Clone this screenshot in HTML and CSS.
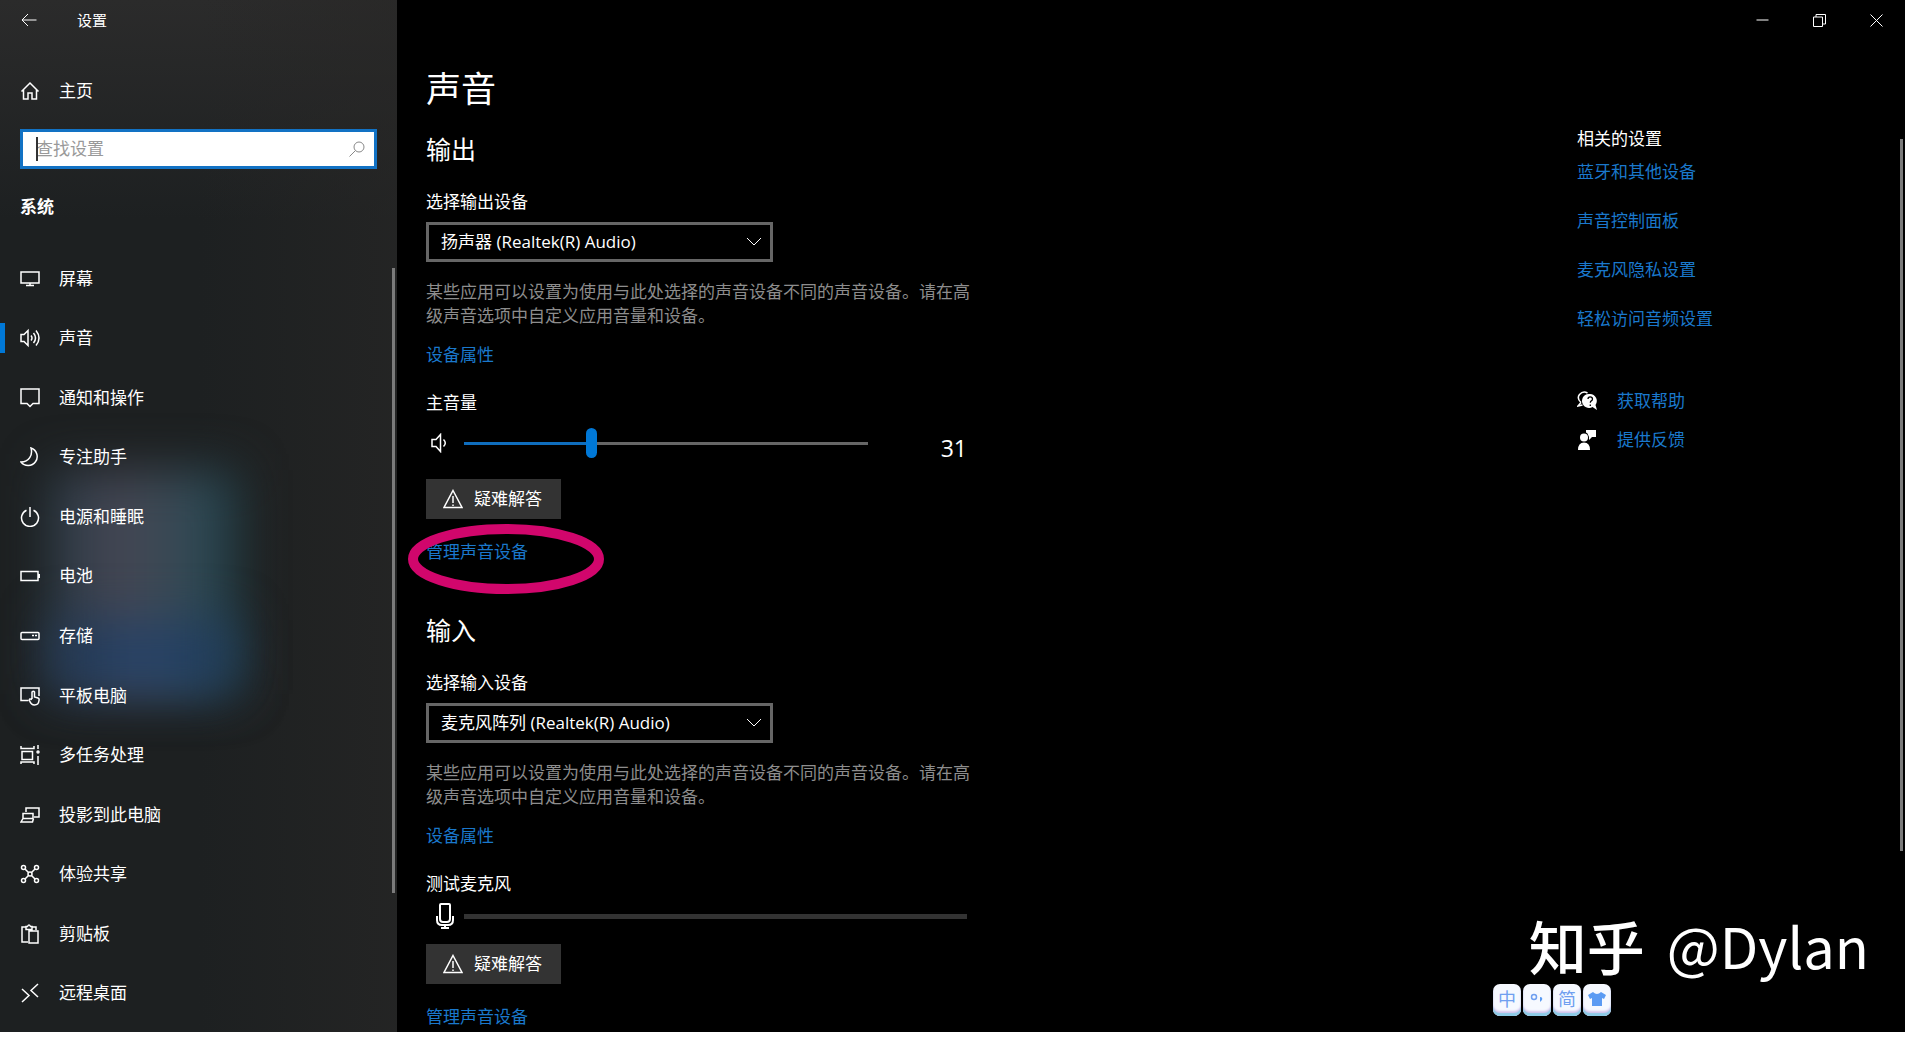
FILE: index.html
```html
<!DOCTYPE html>
<html lang="zh-CN">
<head>
<meta charset="utf-8">
<title>设置</title>
<link rel="stylesheet" href="styles.css">
</head>
<body>
<div class="window">
  <aside class="sidebar">
    <header class="sidebar-title">
      <button class="back" aria-label="返回"><svg class="icon-thin" width="16" height="14" viewBox="0 0 16 14"><path d="M15.500 7H1M7 1L1 7l6 6"/></svg></button>
      <span>设置</span>
    </header>
    <a class="nav-link home" href="#"><svg class="icon" viewBox="0 0 20 20"><path d="M1.500 10.500L10 2l8.500 8.500M3.500 9v9H8v-6h4v6h4.500V9"/></svg>主页</a>
    <label class="search">
      <input type="text" placeholder="查找设置" aria-label="查找设置">
      <svg width="16" height="16" viewBox="0 0 16 16"><circle cx="10" cy="6" r="5"/><path d="M6.500 9.500L.5 15.500"/></svg>
    </label>
    <h2 class="category">系统</h2>
    <nav class="nav">
      <a class="nav-link" href="#"><svg class="icon" viewBox="0 0 20 20"><path d="M1 3h18v11H1zM10 14v2.500M6 16.500h8"/></svg>屏幕</a>
      <a class="nav-link active" href="#"><svg class="icon" viewBox="0 0 20 20"><path d="M1 6.500h3L8 2.500v15l-4-4H1zM11 7.500q2 2.500 0 5M13.500 5q4 5 0 10M16 2.500q6 7.500 0 15"/></svg>声音</a>
      <a class="nav-link" href="#"><svg class="icon" viewBox="0 0 20 20"><path d="M1 1h18v14.500h-6L10 18.500l-3-3H1z"/></svg>通知和操作</a>
      <a class="nav-link" href="#"><svg class="icon" viewBox="0 0 20 20"><path d="M11 1a9 9 0 1 1-10 14C9 15 13 8 11 1z"/></svg>专注助手</a>
      <a class="nav-link" href="#"><svg class="icon" viewBox="0 0 20 20"><path d="M6.500 3.200a8.500 8.500 0 1 0 7 0M10 0v10"/></svg>电源和睡眠</a>
      <a class="nav-link" href="#"><svg class="icon" viewBox="0 0 20 20"><path d="M1 5.500h17v9H1zM19.300 8v4"/></svg>电池</a>
      <a class="nav-link" href="#"><svg class="icon" viewBox="0 0 20 20"><rect x="1" y="6.500" width="18" height="7" rx="1"/><path d="M12 9.500h2M15 9.500h2"/></svg>存储</a>
      <a class="nav-link" href="#"><svg class="icon" viewBox="0 0 20 20"><path d="M8.500 14.500H1V2h18v8M12 13V6q1.500-1.500 2.500 0v5l3.500 1q1.500.5 1 2.500-.5 4.500-4.500 4.500-3.500 0-5-4.500Q9 12 12 13.500"/></svg>平板电脑</a>
      <a class="nav-link" href="#"><svg class="icon" viewBox="0 0 20 20"><path d="M1 1v2.500h13V1M2 6.500h10.500v8H2zM1 19v-2h13v2M18 0v4M18 11v9"/><circle cx="18" cy="7" r="1"/></svg>多任务处理</a>
      <a class="nav-link" href="#"><svg class="icon" viewBox="0 0 20 20"><path d="M6 7V3h13v9h-5M3 8.500h10v5H3zM3 13.500L1 17h11.500l1-3.500"/></svg>投影到此电脑</a>
      <a class="nav-link" href="#"><svg class="icon" viewBox="0 0 20 20"><path d="M5 5l3.500 3.500M15 5l-3.500 3.500M5 15l3.500-3.500M15 15l-3.500-3.500"/><circle cx="3.500" cy="3.500" r="2"/><circle cx="16.500" cy="3.500" r="2"/><circle cx="3.500" cy="16.500" r="2"/><circle cx="16.500" cy="16.500" r="2"/><circle cx="10" cy="10" r="2"/></svg>体验共享</a>
      <a class="nav-link" href="#"><svg class="icon" viewBox="0 0 20 20"><path d="M8 18H2V3h4M12 3h4v3M6 5.500V2.500h1.500Q9-.5 10.500 2.500H12v3zM9 7h9v12H9z"/></svg>剪贴板</a>
      <a class="nav-link" href="#"><svg class="icon" viewBox="0 0 20 20"><path d="M2 6l7 6.500L2 19M18 1l-7 6.500L18 14"/></svg>远程桌面</a>
    </nav>
    <div class="scroll scroll-nav"></div>
  </aside>

  <div class="page">
    <header class="controls">
      <button aria-label="最小化"><svg class="icon-thin" width="13" height="13" viewBox="0 0 13 13"><path d="M.5 6h12"/></svg></button>
      <button aria-label="还原"><svg class="icon-thin" width="13" height="13" viewBox="0 0 13 13"><path d="M.5 3h9v9.500h-9zM3 3V.5h9.500V10h-3"/></svg></button>
      <button aria-label="关闭"><svg class="icon-thin" width="13" height="13" viewBox="0 0 13 13"><path d="M.5.5l12 12M12.500.5l-12 12"/></svg></button>
    </header>
    <div class="columns">
      <main class="content">
        <h1>声音</h1>
        <section>
          <h2>输出</h2>
          <label class="field-label" for="out">选择输出设备</label>
          <div class="select">
            <select id="out"><option>扬声器 (Realtek(R) Audio)</option></select>
            <svg width="16" height="10" viewBox="0 0 16 10"><path d="M1 1l7 7 7-7"/></svg>
          </div>
          <p>某些应用可以设置为使用与此处选择的声音设备不同的声音设备。请在高级声音选项中自定义应用音量和设备。</p>
          <a class="link" href="#">设备属性</a>
          <label class="meter-label" for="volume">主音量</label>
          <div class="volume">
            <svg class="speaker" viewBox="0 0 20 20"><path d="M2 6.500h4l4.500-5v17l-4.500-5H2zM13.500 6.500q3.500 3.500 0 7"/></svg>
            <input type="range" id="volume" min="0" max="100" value="31">
            <output for="volume">31</output>
          </div>
          <button class="trouble"><svg class="icon" viewBox="0 0 20 20"><path d="M10 1.500L19 18.500H1zM10 7v7M10 15.500v1.500"/></svg>疑难解答</button>
          <div class="manage"><a class="link" href="#">管理声音设备</a>
            <svg class="ring" viewBox="0 0 196 72"><ellipse cx="98" cy="36" rx="93" ry="30"/></svg>
          </div>
        </section>
        <section>
          <h2>输入</h2>
          <label class="field-label" for="in">选择输入设备</label>
          <div class="select">
            <select id="in"><option>麦克风阵列 (Realtek(R) Audio)</option></select>
            <svg width="16" height="10" viewBox="0 0 16 10"><path d="M1 1l7 7 7-7"/></svg>
          </div>
          <p>某些应用可以设置为使用与此处选择的声音设备不同的声音设备。请在高级声音选项中自定义应用音量和设备。</p>
          <a class="link" href="#">设备属性</a>
          <label class="meter-label" for="mic">测试麦克风</label>
          <div class="mic">
            <svg viewBox="0 0 18 26"><path d="M5 1h8q1 0 1 1v14q0 3-3 3H7q-3 0-3-3V2q0-1 1-1zM1 13v4q0 5 5 5h6q5 0 5-5v-4M9 22v3M5 25h8"/></svg>
            <progress id="mic" value="0" max="100"></progress>
          </div>
          <button class="trouble"><svg class="icon" viewBox="0 0 20 20"><path d="M10 1.500L19 18.500H1zM10 7v7M10 15.500v1.500"/></svg>疑难解答</button>
          <div class="manage"><a class="link" href="#">管理声音设备</a></div>
        </section>
      </main>
      <aside class="related">
        <h3>相关的设置</h3>
        <div class="related-links">
          <a class="link" href="#">蓝牙和其他设备</a>
          <a class="link" href="#">声音控制面板</a>
          <a class="link" href="#">麦克风隐私设置</a>
          <a class="link" href="#">轻松访问音频设置</a>
        </div>
        <div class="help">
          <a class="link" href="#"><svg viewBox="0 0 20 20"><path class="line" d="M4 11.500Q-.5 7.500 2.500 3.500 6-.5 10.500 2M4 11.500L1 15l4.500-1"/><path class="solid" d="M13 3a7 7 0 1 0 2.500 13l4.500 3-1.500-5A7 7 0 0 0 13 3z"/><path class="mark" d="M11 8q0-2.200 2.200-2.200T15.500 8q0 1.200-1.200 1.800-1 .5-1 2M13.300 13.500v1.500"/></svg>获取帮助</a>
          <a class="link" href="#"><svg viewBox="0 0 20 20"><path class="solid" d="M9 0h10v7h-4l-3 3V7l-1.500-3.500L9 2.500z"/><circle class="solid" cx="7" cy="7.500" r="4"/><path class="solid" d="M1 20q0-7.500 6-7.500t6 7.500z"/></svg>提供反馈</a>
        </div>
      </aside>
    </div>
    <div class="scroll scroll-page"></div>
    <div class="watermark"><b>知乎</b><span>@Dylan</span></div>
    <div class="ime">
      <button>中</button>
      <button aria-label="标点"><svg viewBox="0 0 20 20"><circle class="ime-dot" cx="7" cy="8" r="2.500"/><path class="ime-fill" d="M13 8q3 0 2 3l-2 2z"/></svg></button>
      <button>简</button>
      <button aria-label="皮肤"><svg viewBox="0 0 20 20"><path class="ime-fill" d="M6 3q4 4 8 0l5 3-2 4-2-1v8H5V9l-2 1-2-4z"/></svg></button>
    </div>
  </div>
</div>
</body>
</html>
```
FILE: styles.css
```css
* { box-sizing: border-box; }
body {
  margin: 0;
  background: #fff;
  color: #fff;
  font: 17px/24px "Open Sans", "Noto Sans CJK SC", sans-serif;
}
h1, h2, h3, p { margin: 0; font-weight: 400; }
button, input, select { font: inherit; color: inherit; border: 0; padding: 0; background: none; }
a { color: inherit; text-decoration: none; }
svg { fill: none; stroke: currentColor; flex: none; display: block; }
.icon { width: 20px; height: 20px; stroke-width: 1.500; }
.icon-thin { stroke-width: 1; }

.window {
  display: flex;
  height: calc(100vh - 8px);
  margin-right: 15px;
  background: #000;
  overflow: hidden;
}

/* sidebar */
.sidebar {
  position: relative;
  isolation: isolate;
  display: flex;
  flex-direction: column;
  flex: none;
  width: 397px;
  padding-bottom: 9px;
  overflow: hidden;
  background: linear-gradient(90deg, transparent 50%, rgba(40, 39, 38, .6)), linear-gradient(#2b2b2b, #1d2021 220px);
}
.sidebar::before, .sidebar::after {
  content: "";
  position: absolute;
  z-index: -1;
  left: 50px;
  width: 186px;
  filter: blur(24px);
}
.sidebar::before {
  top: 470px;
  height: 220px;
  background: linear-gradient(90deg, #2a3c48, #454552 35%, #3a4a56 65%, #20444e);
}
.sidebar::after {
  top: 620px;
  height: 74px;
  background: linear-gradient(90deg, #20354f, #2a456a 50%, #1d3a56);
}
.sidebar-title {
  display: flex;
  align-items: center;
  gap: 40px;
  height: 40px;
  padding-left: 21px;
  font-size: 15px;
}
.nav-link {
  position: relative;
  display: flex;
  align-items: center;
  gap: 19px;
  padding-left: 20px;
}
.home { height: 62px; margin-bottom: 7px; margin-top: 20px; }
.search {
  position: relative;
  display: flex;
  align-items: center;
  height: 40px;
  margin: 0 20px;
  padding: 0 9px 0 13px;
  border: 3px solid #1272c4;
  background: #fff;
  color: #888;
}
.search::before {
  content: "";
  position: absolute;
  left: 13px;
  width: 2px;
  height: 24px;
  background: #333;
}
.search input { flex: 1; min-width: 0; outline: 0; }
.search input::placeholder { color: #999; opacity: 1; }
.category { margin: 26px 20px 27px; font-weight: 700; font-size: 17px; line-height: 24px; }
.nav { flex: 1; display: grid; grid-auto-rows: 1fr; margin-top: 3px; }
.active::before {
  content: "";
  position: absolute;
  left: 0;
  width: 5px;
  height: 30px;
  background: #0078d7;
}
.scroll { position: absolute; width: 3px; background: #7b7b7b; }
.scroll-nav { right: 2px; top: 268px; height: 625px; }

/* page */
.page { position: relative; flex: 1; min-width: 0; display: flex; flex-direction: column; }
.controls { display: flex; justify-content: flex-end; flex: none; height: 40px; }
.controls button { display: flex; align-items: center; justify-content: center; width: 57px; }
.columns { display: flex; justify-content: space-between; min-height: 0; }
.content { width: 584px; padding: 25px 0 0 29px; }
h1 { font-size: 35px; line-height: 48px; }
section { display: flex; flex-direction: column; align-items: flex-start; padding-top: 18px; margin-bottom: 30px; }
section h2 { font-size: 25px; line-height: 36px; }
.field-label { margin: 23px 0 8px; }
.select { position: relative; width: 347px; }
.select select {
  display: block;
  width: 100%;
  height: 40px;
  padding: 0 40px 0 12px;
  border: 3px solid #666;
  background: #000;
  appearance: none;
}
.select svg { position: absolute; right: 11px; top: 15px; }
section p { margin: 18px 0 15px; color: #8d8d8d; }
.link { color: #1a78cc; }
.meter-label { margin-top: 24px; }
.volume { display: flex; align-items: center; width: 541px; height: 30px; margin: 13px 0 21px; }
.speaker { width: 20px; height: 20px; margin: 0 14px 0 4px; stroke-width: 1.500; }
.volume input {
  appearance: none;
  width: 404px;
  height: 30px;
  margin: 0;
  background: linear-gradient(90deg, #0f6dbd 31%, #666 31%) center / 100% 3px no-repeat;
}
.volume input::-webkit-slider-thumb {
  appearance: none;
  width: 11px;
  height: 30px;
  border-radius: 6px;
  background: #0078d7;
}
.volume output { align-self: flex-end; margin-left: auto; font-size: 23px; line-height: 20px; }
.mic { display: flex; align-items: center; width: 541px; height: 30px; margin: 5px 0 13px; }
.mic svg { width: 18px; height: 26px; margin: 0 10px 0 10px; stroke-width: 2; }
.mic progress { appearance: none; flex: 1; height: 5px; border: 0; background: #333; }
.mic progress::-webkit-progress-bar { background: #333; }
.trouble {
  display: flex;
  align-items: center;
  gap: 11px;
  width: 135px;
  height: 40px;
  padding-left: 17px;
  background: #333;
}
.manage { position: relative; margin-top: 21px; }
.ring { position: absolute; left: -18px; top: -17px; width: 196px; height: 72px; stroke: #d1066c; stroke-width: 10; }

/* related settings */
.related { width: 328px; padding-top: 87px; }
h3 { font-size: 17px; }
.related-links { display: grid; gap: 25px; margin-top: 9px; }
.help { display: grid; gap: 15px; margin-top: 58px; }
.help .link { display: flex; align-items: center; gap: 20px; }
.help svg { width: 20px; height: 20px; color: #fff; }
.line { stroke-width: 1.500; }
.solid { fill: #fff; stroke: none; }
.mark { stroke: #000; stroke-width: 1.300; }
.scroll-page { right: 2px; top: 139px; height: 712px; }

/* overlays */
.watermark {
  position: absolute;
  right: 36px;
  bottom: 47px;
  display: flex;
  align-items: center;
  gap: 22px;
  font: 56px/80px "Noto Sans CJK SC", sans-serif;
}
.watermark b { font-size: 58px; font-weight: 500; }
.ime { position: absolute; right: 294px; bottom: 16px; display: flex; gap: 2px; }
.ime button {
  display: flex;
  align-items: center;
  justify-content: center;
  width: 28px;
  height: 32px;
  padding-bottom: 3px;
  border-radius: 7px;
  background: #f6f9ff;
  box-shadow: inset 0 -3px 1px #8ccbe6, inset 0 -5px 2px #d5c6ee;
  color: #6f9ff0;
  font-size: 18px;
  line-height: 20px;
}
.ime svg { width: 20px; height: 20px; }
.ime-dot { stroke-width: 1.500; }
.ime-fill { fill: #5b9bf3; stroke: none; }
```
